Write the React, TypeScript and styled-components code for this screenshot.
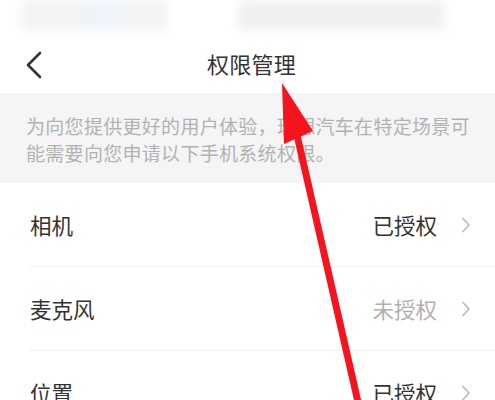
import React from "react";
import styled, { createGlobalStyle } from "styled-components";

const Global = createGlobalStyle`
  html, body { margin: 0; padding: 0; background: #fff; }
  body { font-family: "Noto Sans CJK SC", "Noto Sans", sans-serif; }
`;

const Page = styled.div`
  position: relative;
  width: 495px;
  height: 400px;
  overflow: hidden;
  background: #fff;
`;

const TopStrip = styled.div`
  height: 32px;
  display: flex;
  gap: 72px;
  padding: 0 50px 0 22px;
  box-sizing: border-box;
`;

const BlurBlock = styled.div<{ $w: number; $tint?: boolean }>`
  width: ${(p) => p.$w}px;
  height: 30px;
  background: ${(p) =>
    p.$tint
      ? "linear-gradient(90deg, #f3f3f3 0%, #f1f3f5 40%, #edf4fb 55%, #f3f3f3 75%)"
      : "#f0f0f0"};
  filter: blur(5px);
  border-radius: 4px;
`;

const NavBar = styled.div`
  height: 61px;
  position: relative;
  display: flex;
  align-items: center;
  justify-content: center;
`;

const BackButton = styled.div`
  position: absolute;
  left: 24px;
  top: 18px;
  width: 22px;
  height: 30px;
  display: flex;
  align-items: center;
`;

const Title = styled.div`
  font-size: 22px;
  color: #333;
  letter-spacing: 0.3px;
  margin-left: 8px;
`;

const Info = styled.div`
  height: 90px;
  background: #f5f5f5;
  padding: 19px 10px 0 26px;
  box-sizing: border-box;
  font-size: 19px;
  line-height: 27px;
  color: #b2b2b2;
  letter-spacing: 0.3px;
`;

const List = styled.div`
  display: flex;
  flex-direction: column;
`;

const Row = styled.div<{ $divider: boolean }>`
  height: 83px;
  display: flex;
  align-items: center;
  margin-left: 30px;
  padding-right: 24px;
  border-bottom: ${(p) => (p.$divider ? "1px solid #f0f0f0" : "none")};
`;

const Label = styled.div`
  flex: 1;
  font-size: 21.5px;
  color: #333;
`;

const Status = styled.div<{ $granted: boolean }>`
  font-size: 21.5px;
  color: ${(p) => (p.$granted ? "#333" : "#b0b0b0")};
  margin-right: 24px;
`;

const Overlay = styled.svg`
  position: absolute;
  left: 0;
  top: 0;
  pointer-events: none;
`;

const rows = [
  { label: "相机", granted: true },
  { label: "麦克风", granted: false },
  { label: "位置", granted: true },
];

const Chevron = () => (
  <svg width="10" height="16" viewBox="0 0 10 16">
    <path d="M2 1.5 L8 8 L2 14.5" fill="none" stroke="#bdbdbd" strokeWidth="1.8" strokeLinecap="round" strokeLinejoin="round" />
  </svg>
);

export default function App() {
  return (
    <>
      <Global />
      <Page>
        <TopStrip>
          <BlurBlock $w={145} $tint />
          <BlurBlock $w={205} />
        </TopStrip>
        <NavBar>
          <BackButton>
            <svg width="20" height="28" viewBox="0 0 20 28">
              <path d="M16 2 L4 14 L16 26" fill="none" stroke="#333" strokeWidth="2.6" strokeLinecap="round" strokeLinejoin="round" />
            </svg>
          </BackButton>
          <Title>权限管理</Title>
        </NavBar>
        <Info>
          为向您提供更好的用户体验，理想汽车在特定场景可
          <br />
          能需要向您申请以下手机系统权限。
        </Info>
        <List>
          {rows.map((r, i) => (
            <Row key={r.label} $divider={i < rows.length - 1}>
              <Label>{r.label}</Label>
              <Status $granted={r.granted}>{r.granted ? "已授权" : "未授权"}</Status>
              <Chevron />
            </Row>
          ))}
        </List>
        <Overlay width="495" height="400" viewBox="0 0 495 400">
          <line x1="297" y1="135" x2="358" y2="402" stroke="#f5141e" strokeWidth="7" />
          <polygon points="282,83 313,131 284,144" fill="#f5141e" />
        </Overlay>
      </Page>
    </>
  );
}
